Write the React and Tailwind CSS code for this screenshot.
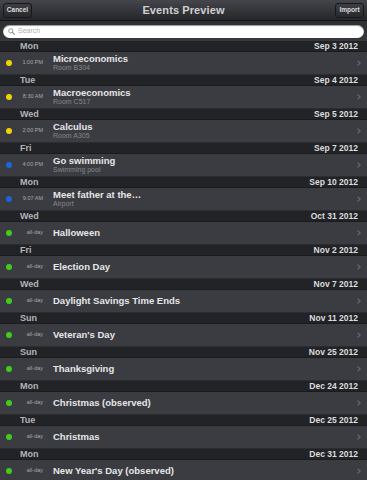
import React from "react";

const events = [
  { day: "Mon", date: "Sep 3 2012", time: "1:00 PM", title: "Microeconomics", sub: "Room B304", color: "bg-[#f2d200]" },
  { day: "Tue", date: "Sep 4 2012", time: "8:30 AM", title: "Macroeconomics", sub: "Room C517", color: "bg-[#f2d200]" },
  { day: "Wed", date: "Sep 5 2012", time: "2:00 PM", title: "Calculus", sub: "Room A305", color: "bg-[#f2d200]" },
  { day: "Fri", date: "Sep 7 2012", time: "4:00 PM", title: "Go swimming", sub: "Swimming pool", color: "bg-[#1c64dc]" },
  { day: "Mon", date: "Sep 10 2012", time: "9:07 AM", title: "Meet father at the…", sub: "Airport", color: "bg-[#1c64dc]" },
  { day: "Wed", date: "Oct 31 2012", time: "all-day", title: "Halloween", color: "bg-[#3fcc1c]" },
  { day: "Fri", date: "Nov 2 2012", time: "all-day", title: "Election Day", color: "bg-[#3fcc1c]" },
  { day: "Wed", date: "Nov 7 2012", time: "all-day", title: "Daylight Savings Time Ends", color: "bg-[#3fcc1c]" },
  { day: "Sun", date: "Nov 11 2012", time: "all-day", title: "Veteran's Day", color: "bg-[#3fcc1c]" },
  { day: "Sun", date: "Nov 25 2012", time: "all-day", title: "Thanksgiving", color: "bg-[#3fcc1c]" },
  { day: "Mon", date: "Dec 24 2012", time: "all-day", title: "Christmas (observed)", color: "bg-[#3fcc1c]" },
  { day: "Tue", date: "Dec 25 2012", time: "all-day", title: "Christmas", color: "bg-[#3fcc1c]" },
  { day: "Mon", date: "Dec 31 2012", time: "all-day", title: "New Year's Day (observed)", color: "bg-[#3fcc1c]" },
];

function Chevron() {
  return (
    <svg width="4" height="6" viewBox="0 0 4 6" className="text-[#6a6b70]">
      <path d="M0.6 0.6 L3.2 3 L0.6 5.4" fill="none" stroke="currentColor" strokeWidth="1.1" />
    </svg>
  );
}

export default function App() {
  return (
    <div className="w-[367px] h-[480px] overflow-hidden bg-[#3a3b40] font-['Liberation_Sans',Arial,sans-serif]">
      {/* Nav bar */}
      <div className="h-[21px] flex items-center justify-between px-[3px] bg-gradient-to-b from-[#45464b] to-[#26272b] border-b border-[#141416]">
        <button className="h-[15px] w-[29px] rounded-[3px] border border-[#17181a] bg-gradient-to-b from-[#3e3f44] to-[#28292d] text-[6.5px] font-bold text-[#dcdcdc] leading-none">
          Cancel
        </button>
        <div className="text-[11px] font-bold text-[#cfd0d2] tracking-[0.1px]">Events Preview</div>
        <button className="h-[15px] w-[29px] rounded-[3px] border border-[#17181a] bg-gradient-to-b from-[#3e3f44] to-[#28292d] text-[6.5px] font-bold text-[#dcdcdc] leading-none">
          Import
        </button>
      </div>

      {/* Search */}
      <div className="h-[20px] flex items-center px-[3px] bg-gradient-to-b from-[#2e2f33] to-[#38393d]">
        <div className="h-[13px] w-full rounded-full bg-white flex items-center pl-[5px] gap-[3px] shadow-[inset_0_1px_1px_rgba(0,0,0,0.4)]">
          <svg width="7" height="7" viewBox="0 0 8 8">
            <circle cx="3.2" cy="3.2" r="2.4" fill="none" stroke="#8a8a8a" strokeWidth="1" />
            <path d="M5 5 L7.3 7.3" stroke="#8a8a8a" strokeWidth="1.2" strokeLinecap="round" />
          </svg>
          <span className="text-[7px] text-[#b0b0b0]">Search</span>
        </div>
      </div>

      {/* List */}
      {events.map((e, i) => (
        <div key={i}>
          <div className="h-[11px] flex items-center justify-between pl-[20px] pr-[9px] bg-[#222326] border-b border-[#1a1b1d]">
            <span className="text-[9px] font-bold text-[#b4b5b7] leading-none">{e.day}</span>
            <span className="text-[8.5px] font-bold text-[#dcdddf] leading-none">{e.date}</span>
          </div>
          <div className="h-[23px] flex items-center bg-[#3b3c41] border-b border-[#2c2d31] pr-[6px]">
            <div className="w-[17px] flex justify-center">
              <div className={`w-[6px] h-[6px] rounded-full ${e.color}`} />
            </div>
            <div className="w-[26px] text-right text-[5.5px] text-[#a8a9ab] leading-none">{e.time}</div>
            <div className="flex-1 pl-[10px] flex flex-col justify-center">
              <div className="text-[9.5px] font-bold text-[#e6e6e8] leading-[10px]">{e.title}</div>
              {e.sub && <div className="text-[7px] text-[#85868a] leading-[8px]">{e.sub}</div>}
            </div>
            <Chevron />
          </div>
        </div>
      ))}
    </div>
  );
}
